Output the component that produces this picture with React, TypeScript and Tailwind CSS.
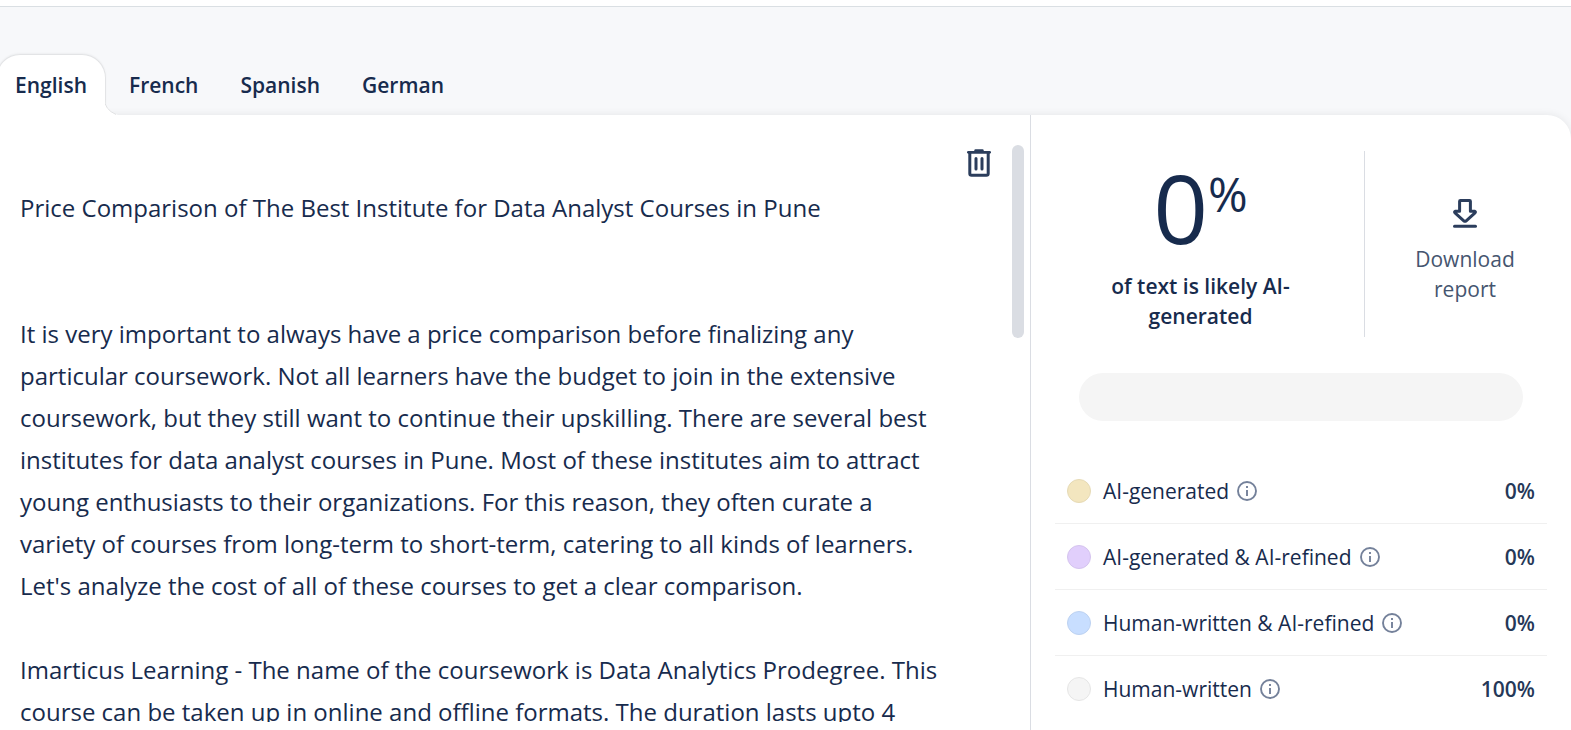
import { useState } from "react";

const LANGUAGES = ["French", "Spanish", "German"];

const DOCUMENT = `Price Comparison of The Best Institute for Data Analyst Courses in Pune


It is very important to always have a price comparison before finalizing any particular coursework. Not all learners have the budget to join in the extensive coursework, but they still want to continue their upskilling. There are several best institutes for data analyst courses in Pune. Most of these institutes aim to attract young enthusiasts to their organizations. For this reason, they often curate a variety of courses from long-term to short-term, catering to all kinds of learners. Let's analyze the cost of all of these courses to get a clear comparison.

Imarticus Learning - The name of the coursework is Data Analytics Prodegree. This course can be taken up in online and offline formats. The duration lasts upto 4`;

const CATEGORIES = [
  { label: "AI-generated", value: "0%", dot: "bg-[#f3e6bf] border-[#e6dab5]" },
  { label: "AI-generated & AI-refined", value: "0%", dot: "bg-[#e1cffc] border-[#d5c4ee]" },
  { label: "Human-written & AI-refined", value: "0%", dot: "bg-[#c8deff] border-[#bdd2f1]" },
  { label: "Human-written", value: "100%", dot: "bg-[#f5f5f5] border-[#e6e6e6]" },
];

function TrashIcon() {
  return (
    <svg width="24" height="28" viewBox="0 0 24 28" fill="none" stroke="#2b3d5c" aria-hidden="true">
      <path d="M1.4 3.3H22.6" strokeWidth="2.8" strokeLinecap="round" />
      <path d="M8.500 1.5H15.500" strokeWidth="2.4" strokeLinecap="round" />
      <path d="M2.8 4V24.4Q2.8 26.2 4.6 26.2H19.4Q21.2 26.2 21.2 24.4V4" strokeWidth="3" />
      <path d="M9 9.500V20M15 9.500V20" strokeWidth="3" strokeLinecap="round" />
    </svg>
  );
}

function DownloadIcon() {
  return (
    <svg width="24" height="29" viewBox="0 0 24 29" fill="none" stroke="#2b3d5c" strokeWidth="3" strokeLinecap="round" strokeLinejoin="round" aria-hidden="true">
      <path d="M7.4 1.5H16.6Q17.4 1.5 17.4 2.3V12.2H21.6Q23 12.6 22 13.8L13.2 21.8Q12 22.8 10.8 21.8L2 13.8Q1 12.6 2.4 12.2H6.6V2.3Q6.6 1.5 7.4 1.5Z" />
      <path d="M1.500 27.3H22.500" />
    </svg>
  );
}

function InfoIcon() {
  return (
    <svg width="20" height="20" viewBox="0 0 20 20" fill="none" stroke="#74819a" aria-hidden="true">
      <circle cx="10" cy="10" r="9" strokeWidth="1.9" />
      <path d="M10 9V15M10 5V7" strokeWidth="1.9" />
    </svg>
  );
}

export default function App() {
  const [text, setText] = useState(DOCUMENT);

  return (
    <div className="flex h-screen flex-col overflow-hidden bg-[#f7f8fa] font-['Open_Sans',sans-serif] text-[#172b4d]">
      <header className="h-[7px] shrink-0 border-b border-[#dadfe3] bg-white" />

      <nav role="tablist" aria-label="Language" className="mt-[47px] flex h-[61px] shrink-0 text-[21px] leading-[30px] font-semibold">
        <button
          role="tab"
          aria-selected="true"
          className="relative z-10 -ml-1 rounded-t-3xl border border-[#e3e4e6] border-b-white bg-white px-[18px] shadow-[0_-1px_2px_rgba(0,0,0,0.04)]"
        >
          English
          <svg width="15" height="16" viewBox="0 0 15 16" className="absolute -right-[15px] -bottom-px" aria-hidden="true">
            <path d="M-1 0H0Q0 11 13 16H-1Z" fill="#fff" />
            <path d="M-.5 0Q-.5 10.500 11 15.500" fill="none" stroke="#e0e1e3" />
          </svg>
        </button>
        <div className="flex pl-[2px]">
          {LANGUAGES.map((language) => (
            <button key={language} role="tab" aria-selected="false" className="px-[21px]">
              {language}
            </button>
          ))}
        </div>
      </nav>

      <main className="flex min-h-0 flex-1 rounded-tr-3xl bg-white shadow-[0_0_8px_rgba(0,0,0,0.08)]">
        <section className="flex min-w-0 flex-1 pb-2">
          <textarea
            aria-label="Text to analyze"
            value={text}
            onChange={(event) => setText(event.target.value)}
            spellCheck={false}
            className="min-w-0 flex-1 resize-none overflow-hidden pt-18 pr-2 pl-5 text-2xl leading-[42px] outline-none"
          />
          <button aria-label="Delete text" className="mt-[34px] mr-[21px] ml-3 self-start">
            <TrashIcon />
          </button>
          <div className="mt-[30px] mr-[6px] h-[193px] w-3 rounded-full bg-[#dadde3]" />
        </section>

        <aside className="w-[541px] shrink-0 border-l border-[#dadde3]">
          <div className="mt-9 flex h-[186px]">
            <div className="flex flex-1 flex-col items-center pl-[6px]">
              <p className="mt-4 flex items-start">
                <span className="text-[96px] leading-[80px]">0</span>
                <span className="text-5xl leading-[54px]">%</span>
              </p>
              <p className="mt-6 w-[200px] text-center text-[21px] leading-[30px] font-semibold">of text is likely AI-generated</p>
            </div>
            <button className="flex w-[207px] flex-col items-center border-l border-[#dadde3] pt-12 pr-[6px] text-[21px] leading-[30px] text-[#45556f]">
              <DownloadIcon />
              <span className="mt-4 w-[120px]">Download report</span>
            </button>
          </div>

          <div className="mx-12 mt-9 h-12 rounded-full bg-[#f5f5f5]" />

          <ul className="mx-6 mt-[37px]">
            {CATEGORIES.map(({ label, value, dot }) => (
              <li key={label} className="flex h-[66px] items-center border-b border-[#f0f0f0] px-3 text-[21px] leading-[30px] last:border-b-0">
                <span className={`size-6 rounded-full border ${dot}`} />
                <span className="ml-3">{label}</span>
                <button aria-label={`About ${label}`} className="ml-2">
                  <InfoIcon />
                </button>
                <span className="ml-auto font-semibold text-[#253858]">{value}</span>
              </li>
            ))}
          </ul>
        </aside>
      </main>
    </div>
  );
}
